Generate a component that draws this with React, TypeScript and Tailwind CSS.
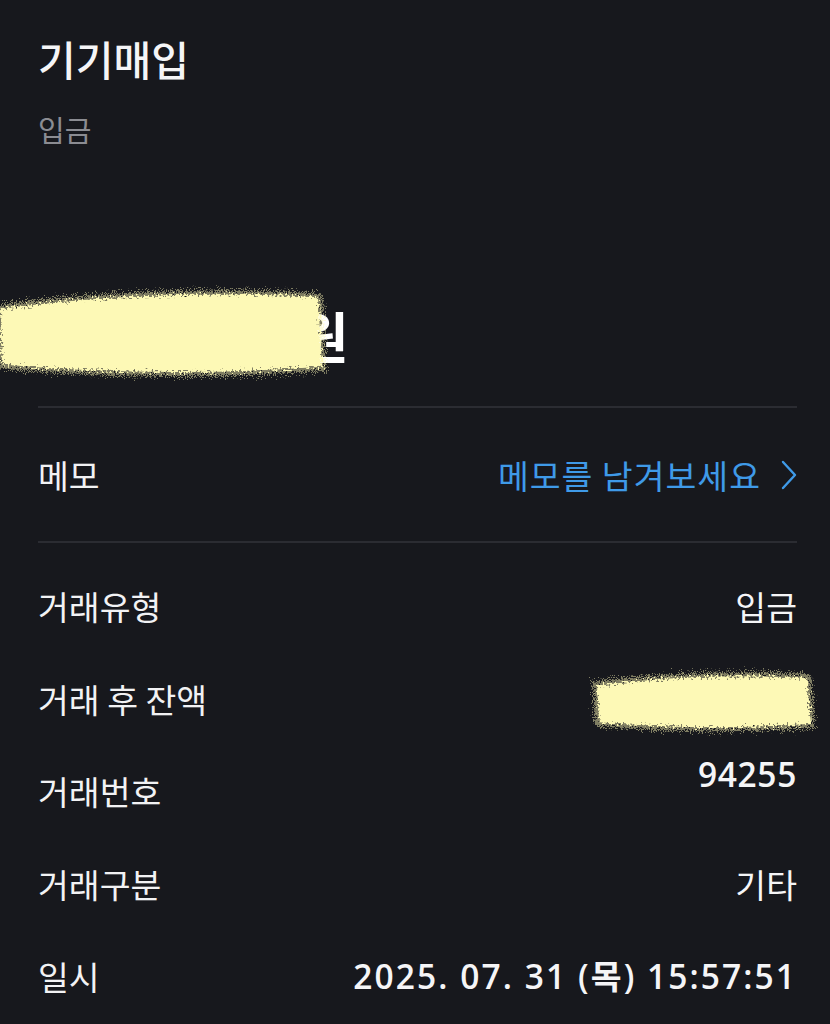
const font = "font-['Noto_Sans_CJK_KR','Noto_Sans',sans-serif]";
const numFont = "font-['Open_Sans','Noto_Sans_CJK_KR',sans-serif]";

function Scribble({ width, height, id }: { width: number; height: number; id: string }) {
  const blob = (inset: number) =>
    `M${10 - inset} ${height * 0.3 - inset} Q ${width * 0.5} ${height * 0.12 - inset} ${width - 12 + inset} ${height * 0.2 - inset} L ${width - 8 + inset} ${height * 0.8 + inset} Q ${width * 0.5} ${height * 0.9 + inset} ${12 - inset} ${height * 0.78 + inset} Z`;
  return (
    <svg width={width} height={height} viewBox={`0 0 ${width} ${height}`} className="block">
      <defs>
        <filter id={id} x="-10%" y="-30%" width="120%" height="160%">
          <feTurbulence type="fractalNoise" baseFrequency="0.5" numOctaves="3" seed="7" />
          <feDisplacementMap in="SourceGraphic" scale="12" />
        </filter>
        <filter id={`${id}-halo`} x="-10%" y="-30%" width="120%" height="160%">
          <feTurbulence type="fractalNoise" baseFrequency="0.9" numOctaves="2" seed="3" />
          <feDisplacementMap in="SourceGraphic" scale="18" />
        </filter>
      </defs>
      <path d={blob(4)} fill="#fdf9b6" opacity="0.45" filter={`url(#${id}-halo)`} />
      <g filter={`url(#${id})`}>
        <path d={blob(0)} fill="#fdf9b6" />
      </g>
    </svg>
  );
}

function Row({ label, children, valueClass = "" }: { label: string; children: React.ReactNode; valueClass?: string }) {
  return (
    <div className="flex h-[92.5px] items-center justify-between">
      <span className="text-[33.5px] leading-[42px] text-[#f2f2f4]">{label}</span>
      <span className={`text-[33.5px] leading-[42px] text-[#f5f5f7] ${valueClass}`}>{children}</span>
    </div>
  );
}

export default function App() {
  return (
    <div className={`min-h-[1024px] w-[830px] overflow-hidden bg-[#17181d] ${font}`}>
      <div className="px-[38px] pt-[33px]">
        <h1 className="text-[41px] leading-[50px] font-medium text-[#f5f5f7]">기기매입</h1>
        <p className="mt-[28px] text-[29px] leading-[36px] text-[#8b8c92]">입금</p>
      </div>

      <div className="relative mt-[155px] h-[64px]">
        <span className="absolute left-[298px] top-0 text-[55px] leading-[64px] font-bold text-white">원</span>
        <div className="absolute -left-[10px] -top-[28px]">
          <Scribble width={340} height={116} id="s1" />
        </div>
      </div>

      <div className="ml-[38px] mr-[33px] mt-[40px] border-t-2 border-[#2b2c32]" />

      <div className="flex h-[133px] items-center justify-between pl-[38px] pr-[33px]">
        <span className="text-[33.5px] leading-[42px] text-[#f2f2f4]">메모</span>
        <span className="flex items-center gap-[20px] text-[33.5px] leading-[42px] tracking-[0.03em] text-[#3f9ae8]">
          메모를 남겨보세요
          <svg width="16" height="30" viewBox="0 0 16 30" fill="none">
            <path d="M2 2 L14 15 L2 28" stroke="#3f9ae8" strokeWidth="2.4" strokeLinecap="round" strokeLinejoin="round" />
          </svg>
        </span>
      </div>

      <div className="ml-[38px] mr-[33px] border-t-2 border-[#2b2c32]" />

      <div className="pl-[38px] pr-[33px] pt-[17px]">
        <Row label="거래유형">입금</Row>
        <div className="relative">
          <Row label="거래 후 잔액">
            <span className="mr-[-2px]">원</span>
          </Row>
          <div className="absolute right-[-22px] top-[10px]">
            <Scribble width={232} height={76} id="s2" />
          </div>
        </div>
        <Row label="거래번호" valueClass={`mb-[34px] font-semibold tracking-[0.02em] ${numFont}`}>94255</Row>
        <Row label="거래구분">기타</Row>
        <Row label="일시" valueClass={`font-semibold tracking-[0.062em] ${numFont}`}>2025. 07. 31 (목) 15:57:51</Row>
      </div>
    </div>
  );
}
